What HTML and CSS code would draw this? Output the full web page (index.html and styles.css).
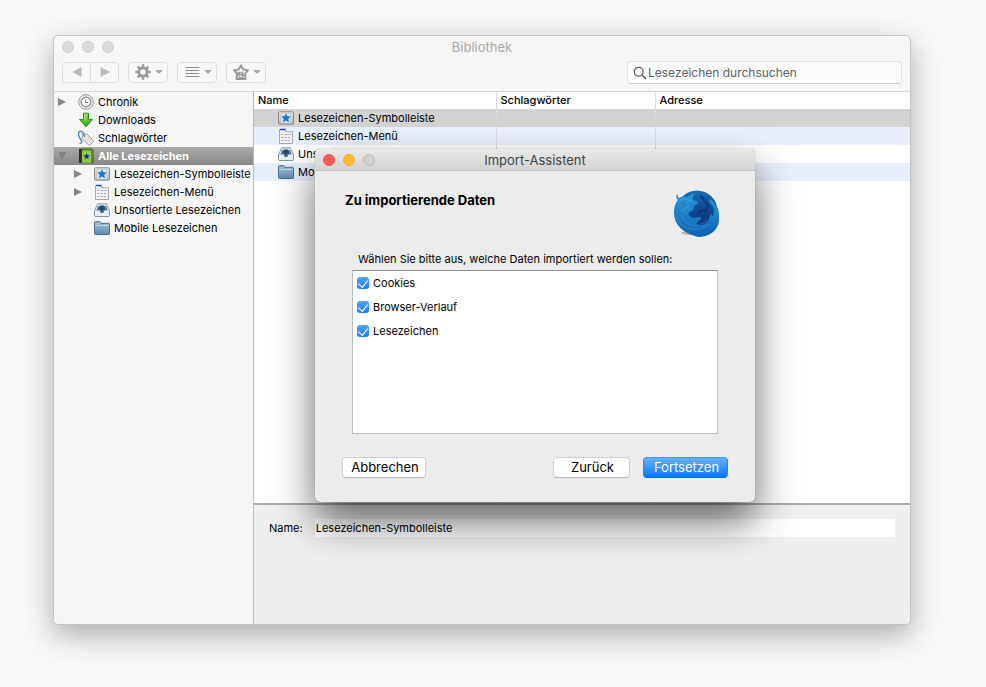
FILE: index.html
```html
<!DOCTYPE html>
<html lang="de">
<head>
<meta charset="utf-8">
<title>Bibliothek</title>
<link rel="stylesheet" href="styles.css">
</head>
<body>
<svg class="sprite" aria-hidden="true">
  <defs>
    <linearGradient id="g-green" x1="0" y1="0" x2="0" y2="1"><stop offset="0" stop-color="#8be04a"/><stop offset="1" stop-color="#22a80f"/></linearGradient>
    <linearGradient id="g-folder" x1="0" y1="0" x2="0" y2="1"><stop offset="0" stop-color="#a3c2da"/><stop offset="1" stop-color="#5f8cb0"/></linearGradient>
    <linearGradient id="g-gray" x1="0" y1="0" x2="0" y2="1"><stop offset="0" stop-color="#e8e8e8"/><stop offset="1" stop-color="#b9b9b9"/></linearGradient>
    <linearGradient id="g-fox" x1="0" y1="0" x2="0" y2="1"><stop offset="0" stop-color="#2a92d6"/><stop offset=".5" stop-color="#1b80c9"/><stop offset="1" stop-color="#0d5fae"/></linearGradient>
    <linearGradient id="g-globe" x1="0" y1="0" x2="0" y2="1"><stop offset="0" stop-color="#1670b8"/><stop offset=".5" stop-color="#0b4590"/><stop offset="1" stop-color="#0a2c70"/></linearGradient>
  </defs>
  <symbol id="i-clock" viewBox="0 0 16 16"><circle cx="8" cy="8" r="7.3" fill="#eee" stroke="#9a9a9a"/><circle cx="8" cy="8" r="4.800" fill="#fff" stroke="#8c8c8c" stroke-width="1.300"/><path d="M7.700 5.500v3h2.500" fill="none" stroke="#777" stroke-width="1.100"/></symbol>
  <symbol id="i-down" viewBox="0 0 16 16"><path d="M5.500 1.200h5v6.200h4L8 14.800 1.500 7.400h4z" fill="url(#g-green)" stroke="#269317" stroke-linejoin="round"/><path d="M6.900 2.300v6.200" stroke="#c4f3a0" fill="none"/></symbol>
  <symbol id="i-tag" viewBox="0 0 16 16"><path d="M4.500 3.800l4.600.4 6 6.200c.5.500.5 1 0 1.500l-3 3c-.5.500-1 .5-1.500 0L4.200 8.600z" fill="#eee" stroke="#999"/><path d="M8 7.500l4.500 4.500M9.500 6.500l4 4M6.500 8.500l4 4" stroke="#ccc" stroke-width=".8"/><circle cx="6.500" cy="6" r="1" fill="#777"/><path d="M6.300 5.500C5.500 1.500 2.200.2 1 2c-1.500 3 .8 6.400 2.400 8.500.9 1.500-.2 3-1.900 2.800" fill="none" stroke="#3986c6" stroke-width="1.300"/></symbol>
  <symbol id="i-book" viewBox="0 0 16 16"><path d="M3.500 .8h10.200l1.500 1.500v12.400H3.500z" fill="#5b852a" stroke="#476c20" stroke-width=".8"/><path d="M3.800 2.600h9.300v12.100H3.800z" fill="#94c943"/><path d="M1 1h2.800v14H2c-.7 0-1-.4-1-1z" fill="#253012"/><path d="M8.600 5l1 2.200 2.400.2-1.900 1.500.6 2.400-2.100-1.300-2.100 1.300.6-2.400-1.900-1.500 2.400-.2z" fill="#1828ae"/></symbol>
  <symbol id="i-bar" viewBox="0 0 16 16"><rect x=".5" y="1.800" width="15" height="12.400" rx="1.200" fill="url(#g-gray)" stroke="#8b8b8b"/><rect x="3" y="3" width="10" height="10" fill="#dce2e8" stroke="#bcbcbc" stroke-width=".5"/><path d="M8 3.200l1.400 3.100 3.400.3-2.600 2.300.8 3.400-3-1.800-3 1.800.8-3.400-2.600-2.300 3.400-.3z" fill="#137bd1"/></symbol>
  <symbol id="i-menu" viewBox="0 0 16 16"><path d="M1.500 1.500h6.300v2.300h6.700v11.700h-13z" fill="#f4f4f7" stroke="#a6a6ad"/><path d="M2 .8h5.500v1.400H2z" fill="#2433e0"/><path d="M3.500 6.500h2m1.200 0h2.600m1 0h2M3.500 9.500h2m1.200 0h1.800m1.200 0h2.600M3.500 12.500h2m1.200 0h2.600m1 0h2" stroke="#a3a3b6" stroke-width="1"/></symbol>
  <symbol id="i-tray" viewBox="0 0 16 16"><path d="M3.500 1.800h9L15.500 9v4.500c0 .7-.4 1-1 1h-13c-.6 0-1-.3-1-1V9z" fill="#e8eef4" stroke="#8195a6"/><path d="M4 4h8l1.600 4.500h-3.300L9.500 11h-3l-.8-2.500H2.400z" fill="#54799a"/><path d="M5.800 3.500h4.400v2.300h2L8 9.300 3.800 5.800h2z" fill="#2b4a66"/></symbol>
  <symbol id="i-folder" viewBox="0 0 16 16"><path d="M.5 13.700V2.500c0-.5.300-.8.800-.8h4.200c.5 0 .8.200 1 .6l.5 1h7.700c.5 0 .8.300.8.800v9.600c0 .5-.3.800-.8.800H1.300c-.5 0-.8-.3-.8-.8z" fill="url(#g-folder)" stroke="#466d8d"/><path d="M1.200 5.500h13.600" stroke="#c1d8e8"/></symbol>
</svg>

<main class="desktop">
  <section class="window" aria-label="Bibliothek">
    <header class="chrome">
      <div class="titlebar">
        <div class="lights"><i></i><i></i><i></i></div>
        <h1 class="title">Bibliothek</h1>
      </div>
      <div class="toolbar">
        <div class="nav">
          <button class="tool" aria-label="Zurück" disabled><svg width="12" height="12" viewBox="0 0 12 12"><path d="M10.500 1v10L1 6z" fill="#bcbcbc"/></svg></button>
          <button class="tool" aria-label="Vor" disabled><svg width="12" height="12" viewBox="0 0 12 12"><path d="M1.500 1v10L11 6z" fill="#bcbcbc"/></svg></button>
        </div>
        <button class="tool drop" aria-label="Verwalten"><svg width="16" height="16" viewBox="0 0 16 16"><g stroke="#9a9a9a" fill="none"><circle cx="8" cy="8" r="4.200" stroke-width="2.800"/><path d="M8 .3v3M8 12.700v3M.3 8h3M12.700 8h3M2.600 2.600l2.100 2.100M11.300 11.300l2.100 2.100M2.600 13.400l2.100-2.100M11.300 4.700l2.100-2.100" stroke-width="2.400"/></g></svg><span class="caret"></span></button>
        <button class="tool drop" aria-label="Ansichten"><svg width="16" height="16" viewBox="0 0 16 16"><path d="M1.500 3.500h14M1.500 6.500h14M1.500 9.500h14M1.500 12.500h14" stroke="#8e8e8e"/></svg><span class="caret"></span></button>
        <button class="tool drop" aria-label="Importieren und Sichern"><svg width="16" height="16" viewBox="0 0 16 16"><path d="M3.600 15l.3-5.200L1.200 6.300l4.500-.9L8 1.500l2.300 3.900 4.500.9-2.700 3.500.3 5.200z" fill="none" stroke="#989898" stroke-width="1.900"/><path d="M4.500 8.300h3.300l2.200 2.400V7.500M8 10.300l2 2 2-2M6 13.500V10M4 11.300l2-2 2 2M6 13.500h4.500" fill="none" stroke="#989898" stroke-width="1.200"/></svg><span class="caret"></span></button>
        <label class="search"><svg width="14" height="14" viewBox="0 0 14 14"><circle cx="5.700" cy="5.700" r="4.400" fill="none" stroke="#595959" stroke-width="1.200"/><path d="M9 9l4 4" stroke="#595959" stroke-width="1.400"/></svg><input type="search" placeholder="Lesezeichen durchsuchen" aria-label="Lesezeichen durchsuchen"></label>
      </div>
    </header>

    <div class="body">
      <nav class="sidebar" aria-label="Ordner">
        <ul class="tree">
          <li class="node"><span class="twisty closed"></span><svg class="icon"><use href="#i-clock"/></svg><a href="#chronik">Chronik</a></li>
          <li class="node"><span class="twisty"></span><svg class="icon"><use href="#i-down"/></svg><a href="#downloads">Downloads</a></li>
          <li class="node"><span class="twisty"></span><svg class="icon"><use href="#i-tag"/></svg><a href="#tags">Schlagwörter</a></li>
          <li class="node current"><span class="twisty open"></span><svg class="icon"><use href="#i-book"/></svg><a href="#alle">Alle Lesezeichen</a></li>
          <li>
            <ul class="tree nested">
              <li class="node"><span class="twisty closed"></span><svg class="icon"><use href="#i-bar"/></svg><a href="#leiste">Lesezeichen-Symbolleiste</a></li>
              <li class="node"><span class="twisty closed"></span><svg class="icon"><use href="#i-menu"/></svg><a href="#menue">Lesezeichen-Menü</a></li>
              <li class="node"><span class="twisty"></span><svg class="icon"><use href="#i-tray"/></svg><a href="#unsortiert">Unsortierte Lesezeichen</a></li>
              <li class="node"><span class="twisty"></span><svg class="icon"><use href="#i-folder"/></svg><a href="#mobil">Mobile Lesezeichen</a></li>
            </ul>
          </li>
        </ul>
      </nav>

      <div class="content">
        <div class="list">
          <table class="grid">
            <colgroup><col class="col-name"><col class="col-tags"><col></colgroup>
            <thead><tr><th>Name</th><th>Schlagwörter</th><th>Adresse</th></tr></thead>
            <tbody>
              <tr class="selected"><td><span class="entry"><svg class="icon"><use href="#i-bar"/></svg>Lesezeichen-Symbolleiste</span></td><td></td><td></td></tr>
              <tr><td><span class="entry"><svg class="icon"><use href="#i-menu"/></svg>Lesezeichen-Menü</span></td><td></td><td></td></tr>
              <tr><td><span class="entry"><svg class="icon"><use href="#i-tray"/></svg>Unsortierte Lesezeichen</span></td><td></td><td></td></tr>
              <tr><td><span class="entry"><svg class="icon"><use href="#i-folder"/></svg>Mobile Lesezeichen</span></td><td></td><td></td></tr>
              <tr class="rest"><td></td><td></td><td></td></tr>
            </tbody>
          </table>
        </div>
        <div class="details">
          <label for="name">Name:</label>
          <input id="name" type="text" value="Lesezeichen-Symbolleiste">
        </div>
      </div>
    </div>

    <form class="dialog" role="dialog" aria-labelledby="dialog-title">
      <div class="titlebar dialog-bar">
        <div class="lights active"><i></i><i></i><i></i></div>
        <h2 class="title" id="dialog-title">Import-Assistent</h2>
      </div>
      <div class="dialog-head">
        <h3>Zu importierende Daten</h3>
        <svg class="logo" viewBox="0 0 46 48" aria-hidden="true">
          <ellipse cx="23" cy="44" rx="15" ry="2" fill="#777" opacity=".5"/>
          <circle cx="24" cy="22" r="20.500" fill="url(#g-globe)"/>
          <path d="M4 5c1 2 1 3 2 4 3-2 6-2 9-1 2-2 4-3 7-3-2 2-3 4-2 6 2 1 4 1 5 2 0 2-3 3-4 4-1 2 0 4-2 5-2 0-4 1-3 4 2 4 7 3 10 2 2 0 3 2 1 3-3 2-5 4-1 5 7 1 11-5 11-11l3 2c2-5 1-10-4-14l1-3c2 1 4 3 5 5l2 3c2 2 1 4 2 6 1 4 0 9-1 12-3 8-11 12-20 12C10 44 1 36 1 24c0-7 2-11 4-13-2-2-2-4-1-6z" fill="url(#g-fox)"/>
          <path d="M7 12c3-3 7-2 10 0-3 0-4 3-1 5-3 3-6 2-7 6" fill="none" stroke="#46a8e0" stroke-width="2" opacity=".4"/>
          <path d="M4 28c4 13 20 16 32 7M8 26c5 12 17 14 26 5" fill="none" stroke="#3d9cdd" stroke-width="2" opacity=".3"/>
          <path d="M27 7c5 2 3 5 6 7s1 6-1 8c-3-2-5 2-7 0" fill="none" stroke="#092665" stroke-width="3" opacity=".45"/>
        </svg>
      </div>
      <fieldset class="choices">
        <legend>Wählen Sie bitte aus, welche Daten importiert werden sollen:</legend>
        <div class="box">
          <label><input type="checkbox" checked>Cookies</label>
          <label><input type="checkbox" checked>Browser-Verlauf</label>
          <label><input type="checkbox" checked>Lesezeichen</label>
        </div>
      </fieldset>
      <div class="actions">
        <button type="button" class="btn cancel">Abbrechen</button>
        <button type="button" class="btn back">Zurück</button>
        <button type="button" class="btn primary">Fortsetzen</button>
      </div>
    </form>
  </section>
</main>
</body>
</html>
```
FILE: styles.css
```css
* { box-sizing: border-box; }

body {
  margin: 0;
  background: #f9f9f9;
  color: #000;
  font: 11px/18px Inter, "Liberation Sans", sans-serif;
}

h1, h2, h3, ul, fieldset { margin: 0; padding: 0; }
ul { list-style: none; }
button, input { font: inherit; color: inherit; }
.sprite { position: absolute; width: 0; height: 0; }

.desktop {
  display: flex;
  height: 100vh;
  padding: 35px 75px 62px 53px;
}

.window {
  position: relative;
  display: flex;
  flex: 1;
  flex-direction: column;
  min-width: 0;
  border: 1px solid #c4c4c4;
  border-radius: 5px;
  background: #f6f6f6;
  box-shadow: 0 10px 30px rgba(0, 0, 0, .32);
}

/* Title bars */
.titlebar {
  display: grid;
  grid-template-columns: 1fr auto 1fr;
  align-items: center;
  height: 22px;
  padding: 0 8px;
}
.lights { display: flex; gap: 8px; }
.lights i {
  width: 12px;
  height: 12px;
  border: 1px solid #cfcfcf;
  border-radius: 50%;
  background: #dcdcdc;
}
.lights.active i:nth-child(1) { background: #fc5b57; border-color: #f25450; }
.lights.active i:nth-child(2) { background: #fdbc2e; border-color: #f0b02c; }
.lights.active i:nth-child(3) { background: #d2d2d2; border-color: #bcbcbc; }
.title { font-size: 13px; font-weight: 400; color: #aaa; }

/* Toolbar */
.toolbar {
  display: flex;
  align-items: center;
  gap: 9px;
  height: 34px;
  padding: 0 8px 5px;
  border-bottom: 1px solid #d6d6d6;
}
.nav { display: flex; }
.tool {
  display: flex;
  align-items: center;
  justify-content: center;
  width: 29px;
  height: 21px;
  padding: 0;
  border: 1px solid #dedede;
  border-radius: 4px;
  background: #f8f8f8;
}
.nav .tool:first-child { border-radius: 4px 0 0 4px; }
.nav .tool:last-child { margin-left: -1px; border-radius: 0 4px 4px 0; }
.drop { gap: 4px; width: 40px; padding-left: 1px; }
.caret {
  border: 4px solid transparent;
  border-top-color: #a9a9a9;
  border-bottom: 0;
}
.search {
  display: flex;
  align-items: center;
  gap: 1px;
  width: 275px;
  height: 23px;
  margin-left: auto;
  padding: 1px 5px 0;
  border: 1px solid #e2e2e2;
  border-bottom-color: #cecece;
  border-radius: 4px;
  background: #fcfcfc;
}
.search input {
  flex: 1;
  min-width: 0;
  padding: 0;
  border: 0;
  outline: 0;
  background: none;
  font-size: 12px;
}
.search input::placeholder { color: #606060; opacity: 1; }

/* Panes */
.body { display: flex; flex: 1; min-height: 0; }
.sidebar {
  flex: 0 0 200px;
  padding-top: 1px;
  border-right: 1px solid #bbb;
}
.icon { flex: none; width: 16px; height: 16px; }
.node {
  display: flex;
  align-items: center;
  gap: 4px;
  height: 18px;
  padding-left: 4px;
  white-space: nowrap;
}
.node a { color: inherit; text-decoration: none; }
.nested .node { padding-left: 20px; }
.twisty { display: flex; width: 16px; }
.closed::before {
  content: "";
  border: 4px solid transparent;
  border-left: 8px solid #858585;
  border-right: 0;
}
.open::before {
  content: "";
  border: 4px solid transparent;
  border-top: 8px solid #828282;
  border-bottom: 0;
}
.current {
  background: linear-gradient(#a9a9a9, #878787);
  color: #fff;
  font-weight: 700;
}

.content { display: flex; flex: 1; flex-direction: column; min-width: 0; }
.list { flex: 1; min-height: 0; background: #fff; }
.grid {
  width: 100%;
  height: 100%;
  border-collapse: collapse;
  table-layout: fixed;
}
.col-name { width: 242px; }
.col-tags { width: 159px; }
.grid th, .grid td {
  height: 18px;
  padding: 0;
  border-right: 1px solid #d9d9de;
}
.grid th {
  height: 17px;
  padding-left: 4px;
  line-height: 17px;
  font-weight: 500;
  text-align: left;
}
.grid th:last-child, .grid td:last-child { border-right: 0; }
.grid tr:nth-child(even) { background: #e9effc; }
.grid .selected { background: #d3d3d3; }
.grid .rest td { height: auto; }
.entry { display: flex; align-items: center; gap: 4px; padding-left: 24px; white-space: nowrap; }

.details {
  display: flex;
  align-items: flex-start;
  gap: 12px;
  height: 121px;
  padding: 14px 15px;
  border-top: 2px solid #aaa;
  border-radius: 0 0 5px 0;
  background: #efefef;
}
.details input {
  flex: 1;
  min-width: 0;
  height: 18px;
  padding: 0 1px;
  border: 0;
  background: #fff;
}

/* Import dialog floating over the library */
.dialog {
  position: absolute;
  top: 113px;
  left: 261px;
  width: 440px;
  border-radius: 5px;
  background: #ececec;
  box-shadow: 0 0 1px rgba(0, 0, 0, .5), 0 20px 40px rgba(0, 0, 0, .58);
}
.dialog-bar {
  border-bottom: 1px solid #c2c2c2;
  border-radius: 5px 5px 0 0;
  background: linear-gradient(#e9e9e9, #d3d3d3);
}
.dialog-bar .title { color: #444; }
.dialog-head {
  display: flex;
  justify-content: space-between;
  padding: 18px 36px 0 30px;
}
.dialog-head h3 { padding-top: 2px; font-size: 13px; font-weight: 700; }
.logo { width: 46px; height: 48px; }
.choices { padding: 13px 37px 0; border: 0; min-width: 0; }
.choices legend { float: left; height: 20px; padding: 0 6px; }
.box {
  clear: both;
  height: 164px;
  padding-left: 4px;
  border: 1px solid #bdbdbd;
  border-top-color: #8f8f8f;
  background: #fff;
}
.box label { display: flex; align-items: center; gap: 4px; height: 24px; }
.box input {
  display: flex;
  align-items: center;
  justify-content: center;
  width: 12px;
  height: 12px;
  margin: 0;
  border-radius: 3px;
  background: linear-gradient(#4da6fb, #1a7dfb);
  appearance: none;
}
.box input:checked::after {
  content: "";
  width: 5px;
  height: 8px;
  margin-bottom: 2px;
  border: solid #fff;
  border-width: 0 1px 1px 0;
  transform: rotate(40deg);
}
.actions { display: flex; padding: 23px 27px 24px; }
.btn {
  height: 21px;
  padding: 0 0 0 2px;
  border: 1px solid #cdcdcd;
  border-bottom-color: #b5b5b5;
  border-radius: 4px;
  background: #fff;
  font-size: 13px;
  line-height: 19px;
}
.cancel { width: 84px; }
.back { width: 77px; margin-left: auto; margin-right: 13px; }
.primary {
  width: 85px;
  border-color: #3f94f8 #2a83f3 #0a6be8;
  background: linear-gradient(#66b0fb, #0a77fc);
  color: #fff;
}
```
